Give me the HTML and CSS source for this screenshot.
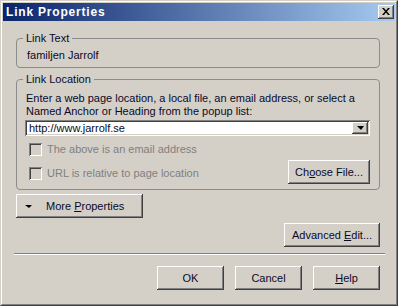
FILE: index.html
```html
<!DOCTYPE html>
<html>
<head>
<meta charset="utf-8">
<link rel="stylesheet" href="styles.css">
</head>
<body>
<div class="window">
  <div class="frame">
    <div class="titlebar">
      <span class="title">Link Properties</span>
      <span class="close"><svg width="8" height="7" viewBox="0 0 8 7"><path d="M0 0h2l2 2.5L6 0h2L5 3.5 8 7H6L4 4.5 2 7H0l3-3.5z" fill="#000"/></svg></span>
    </div>
    <div class="body">
      <div class="group g1">
        <span class="legend">Link Text</span>
        <div class="value">familjen Jarrolf</div>
      </div>
      <div class="group g2">
        <span class="legend">Link Location</span>
        <div class="desc">Enter a web page location, a local file, an email address, or select a<br>Named Anchor or Heading from the popup list:</div>
        <div class="combo">
          <span class="combo-text">http://www.jarrolf.se</span>
          <span class="drop"><span class="tri"></span></span>
        </div>
        <div class="row r1">
          <span class="check"></span><span class="dis">The above is an email address</span>
        </div>
        <div class="row r2">
          <div class="cbwrap"><span class="check"></span><span class="dis">URL is relative to page location</span></div>
          <span class="btn choose"><span>Ch<u>o</u>ose File...</span></span>
        </div>
      </div>
      <span class="btn more"><span class="tri"></span><span class="more-label">More <u>P</u>roperties</span></span>
      <div class="adv-row"><span class="btn adv"><span>Advanced <u>E</u>dit...</span></span></div>
      <div class="sep"></div>
      <div class="footer">
        <span class="btn foot"><span>OK</span></span>
        <span class="btn foot"><span>Cancel</span></span>
        <span class="btn foot"><span><u>H</u>elp</span></span>
      </div>
    </div>
  </div>
</div>
</body>
</html>
```

FILE: styles.css
```css
* { box-sizing: border-box; }
html, body { margin: 0; padding: 0; background: #d4d0c8; }
body {
  font-family: "Liberation Sans", Arial, sans-serif;
  font-size: 11px;
  line-height: 13px;
  color: #0a0a28;
}
.window {
  width: 398px;
  height: 306px;
  border: 1px solid;
  border-color: #d4d0c8 #404040 #404040 #d4d0c8;
  background: #d4d0c8;
}
.frame {
  height: 100%;
  border: 1px solid;
  border-color: #ffffff #808080 #808080 #ffffff;
  padding: 1px;
  display: flex;
  flex-direction: column;
}
.titlebar {
  height: 18px;
  background: linear-gradient(to right, #0a246a, #a6caf0);
  display: flex;
  align-items: center;
  justify-content: space-between;
  padding: 0 1px 0 3px;
}
.title {
  color: #fff;
  font-weight: bold;
  font-size: 12px;
  letter-spacing: 0.8px;
  line-height: 18px;
}
.close {
  width: 16px;
  height: 14px;
  background: #d4d0c8;
  box-shadow: inset -1px -1px #404040, inset 1px 1px #fff, inset -2px -2px #808080;
  display: flex;
  align-items: center;
  justify-content: center;
  padding-bottom: 1px;
}
.body {
  flex: 1;
  padding: 17px 15px 0 13px;
  display: flex;
  flex-direction: column;
  align-items: stretch;
}
.group {
  border: 1px solid #8c8c8c;
  border-radius: 4px;
  display: flex;
  flex-direction: column;
  align-items: flex-start;
}
.legend {
  margin-top: -7px;
  margin-left: 6px;
  padding: 0 3px;
  background: #d4d0c8;
}
.g1 { padding: 0 9px 5px 9px; }
.g1 .legend { margin-left: -3px; }
.g1 .value { margin-top: 4px; padding-left: 1px; }
.g2 {
  margin-top: 11px;
  padding: 0 9px 5px 8px;
  align-items: stretch;
}
.g2 .legend { align-self: flex-start; margin-left: -2px; }
.desc { margin-top: 6px; padding-left: 1px; }
.combo {
  margin-top: 2px;
  height: 16px;
  background: #fff;
  box-shadow: inset 1px 1px #808080, inset -1px -1px #fff, inset 2px 2px #404040, inset -2px -2px #d4d0c8;
  display: flex;
  align-items: center;
  justify-content: space-between;
  padding: 2px 2px 2px 4px;
}
.combo-text { line-height: 12px; }
.drop {
  width: 16px;
  height: 12px;
  background: #d4d0c8;
  box-shadow: inset -1px -1px #404040, inset 1px 1px #fff, inset -2px -2px #808080;
  display: flex;
  align-items: center;
  justify-content: center;
}
.tri {
  width: 0;
  height: 0;
  border-left: 4px solid transparent;
  border-right: 3px solid transparent;
  border-top: 4px solid #000;
}
.row { display: flex; align-items: center; }
.r1 { margin-top: 7px; padding-left: 4px; height: 13px; }
.r2 { margin-top: 4px; align-items: flex-start; justify-content: space-between; }
.cbwrap { display: flex; align-items: center; margin-top: 7px; padding-left: 4px; }
.check {
  width: 13px;
  height: 13px;
  background: #d4d0c8;
  box-shadow: inset 1px 1px #808080, inset -1px -1px #fff, inset 2px 2px #404040, inset -2px -2px #d4d0c8;
  margin-right: 5px;
  flex: none;
}
.dis { color: #808080; }
.btn {
  display: inline-flex;
  align-items: center;
  justify-content: center;
  height: 24px;
  background: #d4d0c8;
  box-shadow: inset -1px -1px #404040, inset 1px 1px #fff, inset -2px -2px #808080;
}
.choose { width: 82px; }
.more {
  margin-top: 4px;
  width: 127px;
  align-self: flex-start;
  justify-content: flex-start;
  padding-left: 9px;
}
.more .tri { border-left-width: 4px; border-right-width: 3px; border-top-width: 3px; }
.more-label { margin-left: 14px; }
.adv-row { display: flex; justify-content: flex-end; margin-top: 5px; }
.adv { width: 96px; }
.sep {
  margin: 6px -5px 0 -2px;
  height: 2px;
  border-top: 1px solid #808080;
  border-bottom: 1px solid #fff;
}
.footer {
  display: flex;
  justify-content: flex-end;
  gap: 11px;
  margin-top: 11px;
}
.foot { width: 67px; }
u { text-decoration: underline; text-underline-offset: 1px; }
```
